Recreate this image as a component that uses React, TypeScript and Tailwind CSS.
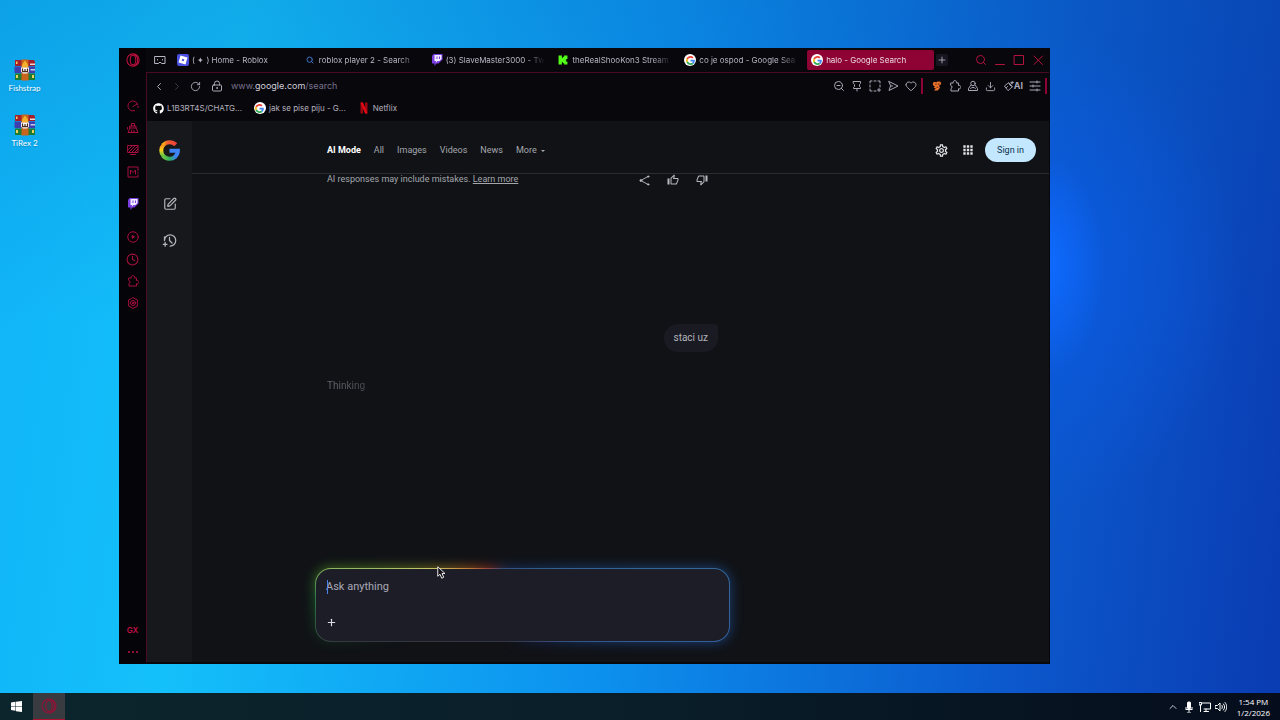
import React from 'react';
import {
  ChevronLeft,
  ChevronRight,
  ChevronUp,
  Clock,
  Download,
  Heart,
  LockKeyhole,
  Plus,
  RotateCw,
  Search,
  SquarePen,
  ZoomOut,
} from 'lucide-react';
import { FaGithub } from 'react-icons/fa';
import { MdApps, MdOutlineSettings, MdOutlineThumbDown, MdOutlineThumbUp } from 'react-icons/md';

type IconProps = { size?: number; className?: string };

// ── Brand marks ────────────────────────────────────────────────────
function OperaIcon({ size = 14, className }: IconProps) {
  return (
    <svg width={size} height={size} viewBox="0 0 24 24" fill="none" stroke="currentColor" strokeWidth="1.8" className={className}>
      <circle cx="12" cy="12" r="10.5" />
      <ellipse cx="12" cy="12" rx="4.8" ry="8.2" />
      <path d="M14 2c4 2 6 5.500 6 10s-2 8-6 10" />
    </svg>
  );
}

function GoogleG({ size = 8 }: IconProps) {
  return (
    <svg width={size} height={size} viewBox="0 0 48 48">
      <path fill="#EA4335" d="M24 9.5c3.54 0 6.710 1.220 9.210 3.600l6.850-6.850C35.900 2.380 30.470 0 24 0 14.620 0 6.510 5.380 2.560 13.220l7.980 6.190C12.430 13.720 17.740 9.500 24 9.500z" />
      <path fill="#4285F4" d="M46.980 24.550c0-1.570-.15-3.090-.38-4.550H24v9.020h12.940c-.58 2.960-2.260 5.480-4.780 7.180l7.730 6c4.510-4.180 7.090-10.360 7.090-17.650z" />
      <path fill="#FBBC05" d="M10.530 28.590c-.48-1.450-.76-2.990-.76-4.590s.27-3.140.76-4.590l-7.980-6.190C.92 16.460 0 20.120 0 24c0 3.880.92 7.540 2.560 10.780l7.970-6.190z" />
      <path fill="#34A853" d="M24 48c6.480 0 11.930-2.130 15.890-5.810l-7.730-6c-2.150 1.450-4.920 2.300-8.160 2.300-6.260 0-11.570-4.220-13.470-9.910l-7.980 6.190C6.510 42.620 14.620 48 24 48z" />
    </svg>
  );
}

function GoogleFavicon() {
  return (
    <span className="flex size-3 items-center justify-center rounded-full bg-white">
      <GoogleG size={9} />
    </span>
  );
}

// Newer Google mark, where the colours run into each other
function GoogleLogo() {
  return (
    <svg width="21" height="21" viewBox="0 0 42 42" aria-label="Google">
      <defs>
        <linearGradient id="g-top" x1="0" y1="0" x2="1" y2="0">
          <stop offset="0" stopColor="#f9b41a" />
          <stop offset=".3" stopColor="#f4622f" />
          <stop offset="1" stopColor="#ea3f3b" />
        </linearGradient>
        <linearGradient id="g-left" x1="0" y1="0" x2="0" y2="1">
          <stop offset="0" stopColor="#f98f1f" />
          <stop offset=".45" stopColor="#fcd018" />
          <stop offset="1" stopColor="#5bc145" />
        </linearGradient>
        <linearGradient id="g-bottom" x1="0" y1="0" x2="1" y2="0">
          <stop offset="0" stopColor="#6fc33f" />
          <stop offset=".55" stopColor="#2fae62" />
          <stop offset="1" stopColor="#3b8be0" />
        </linearGradient>
      </defs>
      <g fill="none" strokeWidth="8">
        <path stroke="url(#g-left)" d="M9 9.500a17 17 0 0 0 0 23" />
        <path stroke="url(#g-top)" d="M33.500 9.500A17 17 0 0 0 8.300 10.300" />
        <path stroke="url(#g-bottom)" d="M8.300 31.700A17 17 0 0 0 32.500 33.400" />
        <path stroke="#3f83f5" d="M21 21.500h16.800a17 17 0 0 1-6 12.400" />
      </g>
    </svg>
  );
}

function RobloxIcon() {
  return (
    <span className="flex size-3 items-center justify-center rounded-xs bg-[#4a50e0]">
      <svg width="10" height="10" viewBox="0 0 20 20">
        <path fill="#fff" fillRule="evenodd" d="M5 1l14 4-4 14L1 15zM8.600 7.400l-1.200 4 4 1.200 1.200-4z" />
      </svg>
    </span>
  );
}

function TwitchIcon({ size = 12 }: IconProps) {
  return (
    <svg width={size} height={size} viewBox="0 0 24 24">
      <path fill="#7a3fe0" d="M5 0L2 4v15h5v5l4-5h4l8-8V0z" />
      <path fill="#f2ecff" d="M7 2h14v8l-4 4h-4l-3 3v-3H7z" />
      <path fill="#7a3fe0" d="M11 5h2v5h-2zM16 5h2v5h-2z" />
    </svg>
  );
}

function KickIcon() {
  return (
    <svg width="10" height="10" viewBox="0 0 18 18">
      <path fill="#53fc18" d="M1 1h6v4h2V3h2V1h6v6h-2v2h-1v1h1v2h2v5h-6v-2H9v-2H7v4H1z" />
    </svg>
  );
}

function NetflixIcon() {
  return (
    <svg width="12" height="12" viewBox="0 0 24 24">
      <path fill="#9c0812" d="M5 1h5v22H5zM14 1h5v22h-5z" />
      <path fill="#e50914" d="M5 1h5l9 22h-5z" />
    </svg>
  );
}

// ── Line icons ─────────────────────────────────────────────────────
function Line({ size = 12, className, children }: IconProps & { children: React.ReactNode }) {
  return (
    <svg
      width={size}
      height={size}
      viewBox="0 0 24 24"
      fill="none"
      stroke="currentColor"
      strokeWidth="2"
      strokeLinecap="round"
      strokeLinejoin="round"
      className={className}
    >
      {children}
    </svg>
  );
}

const SpeedDial = () => (
  <Line>
    <path d="M15 21.500A10 10 0 1 1 21.500 9" />
    <path d="M12 13l8-5M22 12v3" />
  </Line>
);

const Cleaner = () => (
  <Line>
    <path d="M9 8V3h6v5M6 8h12v4H6zM6 12L2 21h20l-4-9M8 21l2-5M14 21v-4M1 11v3" />
  </Line>
);

const Wallpaper = () => (
  <Line>
    <path d="M2 3h20v14H2zM7 21h10M3 11l8-8M3 17L17 3M9 17L22 4M15 17l7-7" />
  </Line>
);

const Mods = () => (
  <Line>
    <path d="M22 9V2H2v20h20v-4M7 16V8l5 5 5-5v8M22 13v1" />
  </Line>
);

const Player = () => (
  <Line>
    <circle cx="12" cy="12" r="10.500" />
    <path d="M10.500 9.500v5l4-2.500z" fill="currentColor" />
  </Line>
);

const Extension = () => (
  <Line>
    <path d="M4 6h4.500a3.500 3.500 0 1 1 6.500 0H19v5a3.500 3.500 0 1 1 0 6.500V22H4v-5a3.200 3.200 0 0 0 0-6z" />
  </Line>
);

const Hexagon = () => (
  <Line>
    <path d="M12 1l4 2.500L21 6l-.5 6 .5 6-5 2.500-4 2.500-4-2.500L3 18l.5-6L3 6l5-2.500z" />
    <circle cx="12" cy="12" r="5" />
    <circle cx="12" cy="12" r="1.500" />
  </Line>
);

const Pin = () => (
  <Line>
    <path d="M5 3h14v4l-2 2v4l2 2v2H5v-2l2-2V9L5 7zM12 17v5" />
  </Line>
);

const Snapshot = () => (
  <Line>
    <path d="M2 6V2h4M10 2h4M18 2h4v4M22 10v4M2 10v4M2 18v4h4M10 22h4M20 17v6M17 20h6" />
  </Line>
);

const Flow = () => (
  <Line>
    <path d="M4 3l18 9-18 9 3-9zM7 12h4" />
  </Line>
);

const Profile = () => (
  <Line>
    <circle cx="12" cy="7" r="4.500" />
    <path d="M7 11l-4 6v4h18v-4l-4-6M7 17c3-3 7-3 10 0" />
  </Line>
);

const Sliders = () => (
  <Line>
    <path d="M2 4h20M2 12h20M2 20h20M16 2v4M8 10v4M16 18v4" />
  </Line>
);

const Brush = () => (
  <Line size={11}>
    <path d="M12 4L3 11l8 10 9-8zM13 5l2 4 5 3M17 7l4-4M7 15l3-3M20 1v5M23 3h-6" />
  </Line>
);

const HistorySpark = () => (
  <Line size={15}>
    <path d="M4 12a9 9 0 1 1 9 9M4 12V6M12 7v5l4 4" />
    <path d="M5 15v6M2 18h6" />
  </Line>
);

const Share = () => (
  <Line size={11}>
    <path d="M20 3L4 12l16 9" />
    <circle cx="20" cy="3.500" r="1.500" fill="currentColor" />
    <circle cx="4" cy="12" r="2" fill="currentColor" />
    <circle cx="20" cy="20.500" r="1.500" fill="currentColor" />
  </Line>
);

function Monkey() {
  return (
    <svg width="10" height="10" viewBox="0 0 24 24">
      <path fill="#e8702a" d="M2 7c0-5 5-5 8-4 4-3 12-2 12 3 0 3-3 4-5 5l2 5-5 7H5l4-6-5-1 3-4C4 12 2 10 2 7z" />
      <path fill="#5a1f12" d="M8 6h3v3H8zM15 6h3v3h-3zM11 14h4v2h-4z" />
    </svg>
  );
}

// Stack of three books with a belt round them
function ArchiveIcon() {
  return (
    <svg width="22" height="22" viewBox="0 0 44 44">
      <path fill="#a31f2b" d="M2 2h38l2 4v8H2z" />
      <path fill="#e8d9d2" d="M32 9h10v3H32z" />
      <path fill="#3d3fae" d="M1 15h41v13H1z" />
      <path fill="#c9cbea" d="M33 20h9v3h-9z" />
      <path fill="#1f7a32" d="M2 29h40v13H2z" />
      <path fill="#f0d060" d="M4 32h4v6H4zM36 32h4v6h-4zM4 5h3v5H4z" />
      <path fill="#c8641c" d="M15 1h14v42H15z" />
      <path fill="#f2b02c" d="M16 11l6-8 6 8v6H16z" />
      <path fill="#fff" d="M14 17h16v8l-4 4h-8l-4-4z" />
      <path fill="none" stroke="#4a2a18" strokeWidth="2.500" d="M17 19v6h5v-5M22 25h5v-6" />
    </svg>
  );
}

function IconButton({ label, className = '', children }: { label: string; className?: string; children: React.ReactNode }) {
  return (
    <button type="button" aria-label={label} className={`flex h-3 shrink-0 items-center justify-center ${className}`}>
      {children}
    </button>
  );
}

const tabs = [
  { title: '( ✦ ) Home - Roblox', icon: <RobloxIcon /> },
  { title: 'roblox player 2 - Search', icon: <Search size={8} strokeWidth={3} className="text-[#3f74c9]" /> },
  { title: '(3) SlaveMaster3000 - Tw', icon: <TwitchIcon /> },
  { title: 'theRealShooKon3 Stream', icon: <KickIcon /> },
  { title: 'co je ospod - Google Sea', icon: <GoogleFavicon /> },
  { title: 'halo - Google Search', icon: <GoogleFavicon />, active: true },
];

const bookmarks = [
  { title: 'L1B3RT4S/CHATG...', icon: <FaGithub size={11} className="text-white" /> },
  { title: 'jak se pise piju - G...', icon: <GoogleFavicon /> },
  { title: 'Netflix', icon: <NetflixIcon /> },
];

function OperaSidebar() {
  return (
    <aside className="flex w-[27px] shrink-0 flex-col items-center bg-[#050408] pb-1.5 text-[#a80f3f]">
      <IconButton label="Opera menu" className="mt-1.5">
        <OperaIcon className="text-[#c01040]" />
      </IconButton>
      <div className="mt-[34px] flex flex-col gap-2.5">
        <IconButton label="Speed dial"><SpeedDial /></IconButton>
        <IconButton label="GX Cleaner"><Cleaner /></IconButton>
        <IconButton label="Wallpapers"><Wallpaper /></IconButton>
        <IconButton label="Mods"><Mods /></IconButton>
      </div>
      <IconButton label="Twitch" className="mt-5"><TwitchIcon /></IconButton>
      <div className="mt-[21px] flex flex-col gap-2.5">
        <IconButton label="Player"><Player /></IconButton>
        <IconButton label="History"><Clock size={13} /></IconButton>
        <IconButton label="Extensions"><Extension /></IconButton>
        <IconButton label="Settings"><Hexagon /></IconButton>
      </div>
      <div className="mt-auto flex flex-col gap-2.5 text-[#c01046]">
        <IconButton label="GX Corner" className="text-[8px] font-semibold">GX</IconButton>
        <IconButton label="Sidebar setup" className="gap-0.5">
          <span className="size-0.5 rounded-full bg-current" />
          <span className="size-0.5 rounded-full bg-current" />
          <span className="size-0.5 rounded-full bg-current" />
        </IconButton>
      </div>
    </aside>
  );
}

function TabBar() {
  return (
    <div className="flex h-6 items-center text-[8px] text-[#b9b6c4]">
      <IconButton label="Tab islands" className="w-[27px]">
        <Line>
          <path d="M2 5h20v14h-7l-1-2h-4l-1 2H2z" />
          <path d="M7 11v1M17 11v1" />
        </Line>
      </IconButton>
      <div className="flex min-w-0 flex-1">
        {tabs.map(({ title, icon, active }) => (
          <button
            key={title}
            type="button"
            className={`flex h-5 min-w-0 flex-1 items-center gap-[3px] rounded-xs pr-2 pl-1 ${
              active ? 'bg-[#8e0334] text-[#ecdbe3]' : ''
            }`}
          >
            <span className="flex w-3 shrink-0 justify-center">{icon}</span>
            <span className="min-w-0 flex-1 text-left whitespace-nowrap mask-r-from-80%">{title}</span>
          </button>
        ))}
      </div>
      <IconButton label="New tab" className="ml-0.5 w-3 rounded-xs bg-[#17151f]"><Plus size={10} /></IconButton>
      <div className="mr-[5px] ml-[27px] flex gap-[7px] text-[#b3123f]">
        <IconButton label="Search tabs" className="w-3"><Search size={12} /></IconButton>
        <IconButton label="Minimize" className="w-3"><Line><path d="M3 21h18" /></Line></IconButton>
        <IconButton label="Maximize" className="w-3"><Line><path d="M3 3h18v18H3z" /></Line></IconButton>
        <IconButton label="Close" className="w-3"><Line><path d="M4 4l17 17M21 4L4 21" /></Line></IconButton>
      </div>
    </div>
  );
}

function AddressBar() {
  return (
    <div className="flex h-[26px] items-center text-[#aaa7b6]">
      <div className="flex gap-1.5 pl-1.5">
        <IconButton label="Back" className="w-3"><ChevronLeft size={15} /></IconButton>
        <IconButton label="Forward" className="w-3 text-[#3c3945]"><ChevronRight size={15} /></IconButton>
        <IconButton label="Reload" className="w-3"><RotateCw size={11} /></IconButton>
      </div>
      <LockKeyhole size={12} className="ml-2.5" />
      <div className="ml-2 flex-1 text-[9px] text-[#77728c]">
        www.<span className="text-[#d0cdd9]">google.com</span>/search
      </div>
      <div className="flex gap-1.5">
        <IconButton label="Zoom out" className="w-3"><ZoomOut size={12} /></IconButton>
        <IconButton label="Pin" className="w-3"><Pin /></IconButton>
        <IconButton label="Snapshot" className="w-3"><Snapshot /></IconButton>
        <IconButton label="Send to My Flow" className="w-3"><Flow /></IconButton>
        <IconButton label="Add bookmark" className="w-3"><Heart size={12} /></IconButton>
      </div>
      <span className="mx-1 h-4 w-0.5 bg-[#8e0334]" />
      <div className="ml-1 flex gap-1.5">
        <IconButton label="Monkey extension" className="w-3"><Monkey /></IconButton>
        <IconButton label="Extensions" className="w-3"><Extension /></IconButton>
        <IconButton label="Profile" className="w-3"><Profile /></IconButton>
        <IconButton label="Downloads" className="w-3"><Download size={11} /></IconButton>
        <IconButton label="AI" className="text-[9px] font-bold"><Brush />AI</IconButton>
        <IconButton label="Easy setup" className="w-3"><Sliders /></IconButton>
      </div>
      <span className="mr-0.5 ml-1 h-4 w-0.5 bg-[#8e0334]" />
    </div>
  );
}

function Bookmarks() {
  return (
    <nav className="flex h-[22px] items-start gap-3 pt-[3px] pl-[5px] text-[8px] text-[#b4b1be]">
      {bookmarks.map(({ title, icon }) => (
        <a key={title} href="#" className="flex h-3 items-center gap-[3px]">
          <span className="flex w-3 justify-center">{icon}</span>
          {title}
        </a>
      ))}
    </nav>
  );
}

function Composer() {
  return (
    <div className="relative mb-5">
      <div className="absolute -inset-px rounded-[17px] bg-[conic-gradient(#16305c,#1a3f70_80deg,#1a3f78_100deg,#16234a_140deg,#141a30_180deg,transparent_200deg,transparent_255deg,#1d5a2c_272deg,#45701f_281deg,#7a6c20_291deg,#9a5818_301deg,#902c20_315deg,#1f3564_332deg,#16305c)] opacity-90 blur-[6px]" />
      <div className="relative rounded-2xl bg-[conic-gradient(#315685,#33679a_80deg,#335f9a_100deg,#36466c_150deg,#32364a_200deg,#33383f_258deg,#2f7548_272deg,#8fb860_281deg,#c8c868_291deg,#c88a3a_301deg,#a0463c_315deg,#31507c_332deg,#315685)] p-px">
        <div className="rounded-[15px] bg-[#1d1d27] pt-[9px] pr-2.5 pb-[13px] pl-[9px]">
          <div className="relative">
            <span className="absolute top-0.5 left-0.5 h-3.5 w-px bg-[#4f7fe8]" />
            <textarea
              aria-label="Ask anything"
              placeholder="Ask anything"
              rows={1}
              className="block h-5 w-full resize-none bg-transparent px-px text-[11px] leading-[18px] text-[#d5d5e0] outline-none placeholder:text-[#a9a9b5]"
            />
          </div>
          <IconButton label="Add files" className="mt-[18px] w-3 text-[#dcdce4]"><Plus size={11} strokeWidth={2.500} /></IconButton>
        </div>
      </div>
      <svg width="9" height="13" viewBox="0 0 18 26" className="absolute -top-0.5 left-[122px]">
        <path d="M1.500 1.500v19l4.500-4 3.500 8 4-2-3.500-7.500h6z" fill="#14141a" stroke="#e6e6e6" strokeWidth="2" />
      </svg>
    </div>
  );
}

function SearchPage() {
  return (
    <div className="flex min-h-0 flex-1 bg-[#101216] font-[Roboto,sans-serif] text-[9px] text-[#a5a7ad]">
      <aside className="flex w-[45px] shrink-0 flex-col items-center bg-[#16181c] pt-[19px] text-[#b5b7bd]">
        <GoogleLogo />
        <button type="button" aria-label="New thread" className="mt-9"><SquarePen size={14} /></button>
        <button type="button" aria-label="Thread history" className="mt-[22px]"><HistorySpark /></button>
      </aside>
      <div className="flex min-w-0 flex-1 flex-col">
        <header className="flex h-[53px] items-center justify-between border-b border-[#2a2c31] pt-1.5 pr-[13px] pl-[135px]">
          <nav className="flex items-center gap-[13px] pt-0.5">
            <a href="#" className="font-bold text-white">AI Mode</a>
            <a href="#">All</a>
            <a href="#">Images</a>
            <a href="#">Videos</a>
            <a href="#">News</a>
            <button type="button" className="flex items-center gap-1">
              More
              <svg width="4" height="2" viewBox="0 0 4 2"><path d="M0 0h4L2 2z" fill="currentColor" /></svg>
            </button>
          </nav>
          <div className="flex items-center text-[#e3e4e8]">
            <button type="button" aria-label="Settings"><MdOutlineSettings size={15} /></button>
            <button type="button" aria-label="Google apps" className="mr-2.5 ml-3"><MdApps size={14} /></button>
            <a href="#" className="rounded-full bg-[#c2e7ff] px-3 py-1.5 leading-3 text-[#0b2f4a]">Sign in</a>
          </div>
        </header>
        <main className="ml-[123px] flex w-full max-w-[415px] flex-1 flex-col">
          <div className="flex h-3 items-center justify-between pr-[22px] pl-3">
            <p>
              AI responses may include mistakes. <a href="#" className="underline">Learn more</a>
            </p>
            <div className="flex gap-[17px] text-[#b8bac0]">
              <button type="button" aria-label="Share"><Share /></button>
              <button type="button" aria-label="Good response"><MdOutlineThumbUp size={12} /></button>
              <button type="button" aria-label="Bad response"><MdOutlineThumbDown size={12} /></button>
            </div>
          </div>
          <p className="mt-[138px] mr-3 self-end rounded-2xl rounded-tr-sm bg-[#1a1a22] px-2.5 py-2 text-[10px] leading-3 text-[#b3b3bc]">
            staci uz
          </p>
          <p className="mt-7 self-start bg-linear-to-r from-[#74767b] to-[#484a4f] bg-clip-text pl-3 text-[10px] leading-3 text-transparent">
            Thinking
          </p>
          <div className="mt-auto">
            <Composer />
          </div>
        </main>
      </div>
    </div>
  );
}

function BrowserWindow() {
  return (
    <section className="mt-12 mr-[230px] mb-[29px] ml-[70px] flex min-w-0 flex-1 bg-[#08070c] pr-px">
      <OperaSidebar />
      <div className="flex min-w-0 flex-1 flex-col pb-0.5">
        <TabBar />
        <div className="flex min-h-0 flex-1 flex-col border-t border-l border-[#4a0a22]">
          <AddressBar />
          <Bookmarks />
          <SearchPage />
        </div>
      </div>
    </section>
  );
}

function Taskbar() {
  return (
    <footer className="flex h-[27px] items-center bg-linear-to-r from-[#0c252c] via-[#0a1e2a] to-[#050d1c] text-white">
      <button type="button" aria-label="Start" className="flex w-[33px] justify-center">
        <svg width="11" height="11" viewBox="0 0 22 22" fill="#fff">
          <path d="M0 3l9-1.300V10H0zM10 1.500L22 0v10H10zM0 11h9v8.300L0 18zM10 11h12v11l-12-1.500z" />
        </svg>
      </button>
      <button type="button" aria-label="Opera GX" className="flex h-full w-8 items-center justify-center border-b border-[#b01030] bg-[#383c40] text-[#941238]">
        <OperaIcon size={16} />
      </button>
      <div className="ml-auto flex items-center gap-1 pr-2.5">
        <ChevronUp size={12} className="text-[#c5cad0]" />
        <svg width="12" height="12" viewBox="0 0 24 24" fill="#fff">
          <rect x="8" y="1" width="8" height="15" rx="3" />
          <path d="M5 12h2v4h10v-4h2v6h-6v4h3v1H8v-1h3v-4H5z" />
        </svg>
        <Line><path d="M6 4h17v12H10M14 16v5M10 21h9M1 3h4v5H1zM3 8v13" /></Line>
        <Line><path d="M1 9h4l5-5v16l-5-5H1zM14 9c1 2 1 4 0 6M17 6c3 4 3 8 0 12M20 3c5 6 5 12 0 18" /></Line>
        <div className="ml-1.5 text-center font-['Open_Sans',sans-serif] text-[8px] leading-[11px]">
          <p>1:54 PM</p>
          <p>1/2/2026</p>
        </div>
      </div>
    </footer>
  );
}

export default function App() {
  return (
    <div className="flex min-h-screen flex-col bg-[radial-gradient(ellipse_60px_110px_at_1045px_265px,#0f6bff,transparent),radial-gradient(ellipse_200px_240px_at_1040px_270px,#0b5ae0,transparent),linear-gradient(to_bottom,#0050a030,transparent_45%),linear-gradient(97deg,#10b4f8,#14c0fa_18%,#0c90ee_50%,#0c58cc_80%,#0a3bb2)] font-[Inter,sans-serif]">
      <div className="flex flex-1">
        <div className="flex w-[49px] shrink-0 flex-col gap-5 pt-[59px] font-[Lato,sans-serif] text-[8px] leading-3 text-white">
          {['Fishstrap', 'TiRex 2'].map((name) => (
            <button key={name} type="button" className="flex flex-col items-center gap-px text-shadow-xs">
              <ArchiveIcon />
              {name}
            </button>
          ))}
        </div>
        <BrowserWindow />
      </div>
      <Taskbar />
    </div>
  );
}
